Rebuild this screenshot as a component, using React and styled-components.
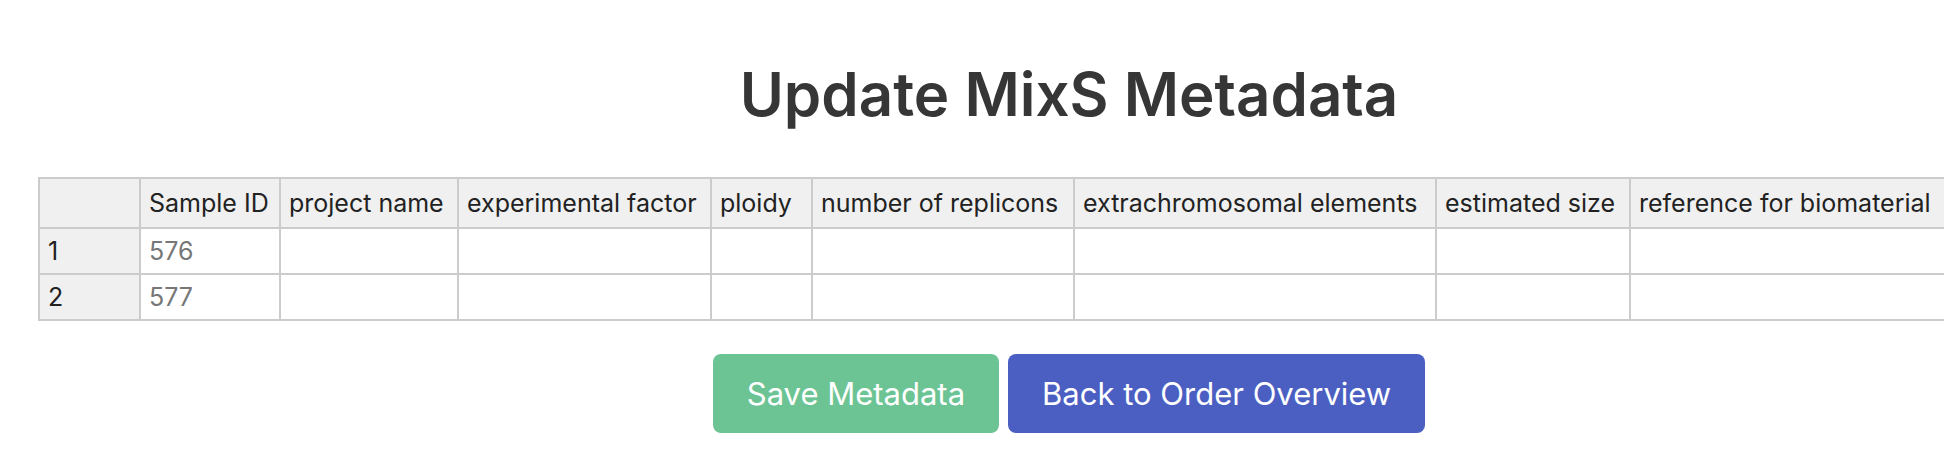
import React from "react";
import styled, { createGlobalStyle } from "styled-components";

const GlobalStyle = createGlobalStyle`
  html, body {
    margin: 0;
    padding: 0;
    background: #fff;
    overflow: hidden;
  }
  body {
    font-family: Inter, "Noto Sans", "Liberation Sans", sans-serif;
    color: #222;
  }
`;

const Page = styled.main`
  padding: 60px 0 0 38px;
`;

const Content = styled.div`
  width: 2062px;
  display: flex;
  flex-direction: column;
  align-items: center;
`;

const Title = styled.h1`
  margin: 0 0 49px;
  font-size: 60px;
  line-height: 68px;
  font-weight: 600;
  color: #363636;
  text-align: center;
`;

const TableWrap = styled.div`
  align-self: flex-start;
  width: 1906px;
  overflow: hidden;
`;

const Table = styled.table`
  width: ${(p) => p.$width}px;
  border-collapse: separate;
  border-spacing: 0;
  table-layout: fixed;
  font-size: 25px;
  line-height: 42px;
  white-space: nowrap;
`;

const HeadCell = styled.th`
  box-sizing: border-box;
  height: 52px;
  padding: 0 8px;
  background: #f0f0f0;
  color: #222;
  font-weight: 400;
  text-align: left;
  border-top: 2px solid #ccc;
  border-right: 2px solid #ccc;
  border-bottom: 2px solid #ccc;
  overflow: hidden;

  &:first-child {
    border-left: 2px solid #ccc;
  }
`;

const RowHead = styled.th`
  box-sizing: border-box;
  height: 46px;
  padding: 0 8px;
  background: #f0f0f0;
  color: #222;
  font-weight: 400;
  text-align: left;
  border-left: 2px solid #ccc;
  border-right: 2px solid #ccc;
  border-bottom: 2px solid #ccc;
`;

const Cell = styled.td`
  box-sizing: border-box;
  height: 46px;
  padding: 0 8px;
  background: #fff;
  color: ${(p) => (p.$dimmed ? "#777" : "#222")};
  border-right: 2px solid #ccc;
  border-bottom: 2px solid #ccc;
  overflow: hidden;
`;

const Buttons = styled.div`
  margin-top: 33px;
  display: flex;
  gap: 9px;
`;

const Button = styled.button`
  height: 79px;
  padding: 0 33px;
  border: 1px solid transparent;
  border-radius: 8px;
  background: ${(p) => p.$bg};
  color: #fff;
  font-family: inherit;
  font-size: 31px;
  font-weight: 400;
  line-height: 1;
  cursor: pointer;
`;

const columns = [
  { label: "", width: 103 },
  { label: "Sample ID", width: 140 },
  { label: "project name", width: 178 },
  { label: "experimental factor", width: 253 },
  { label: "ploidy", width: 101 },
  { label: "number of replicons", width: 262 },
  { label: "extrachromosomal elements", width: 362 },
  { label: "estimated size", width: 194 },
  { label: "reference for biomaterial", width: 330 },
];

const rows = [
  { id: 1, sample: "576" },
  { id: 2, sample: "577" },
];

const tableWidth = columns.reduce((sum, col) => sum + col.width, 0);

const App = () => {
  return (
    <>
      <GlobalStyle />
      <Page>
        <Content>
          <Title>Update MixS Metadata</Title>
          <TableWrap>
            <Table $width={tableWidth}>
              <colgroup>
                {columns.map((col, i) => (
                  <col key={i} style={{ width: col.width }} />
                ))}
              </colgroup>
              <thead>
                <tr>
                  {columns.map((col, i) => (
                    <HeadCell key={i}>{col.label}</HeadCell>
                  ))}
                </tr>
              </thead>
              <tbody>
                {rows.map((row) => (
                  <tr key={row.id}>
                    <RowHead>{row.id}</RowHead>
                    <Cell $dimmed>{row.sample}</Cell>
                    {columns.slice(2).map((col, i) => (
                      <Cell key={i} />
                    ))}
                  </tr>
                ))}
              </tbody>
            </Table>
          </TableWrap>
          <Buttons>
            <Button $bg="#6cc494">Save Metadata</Button>
            <Button $bg="#4b5fc2">Back to Order Overview</Button>
          </Buttons>
        </Content>
      </Page>
    </>
  );
};

export default App;
